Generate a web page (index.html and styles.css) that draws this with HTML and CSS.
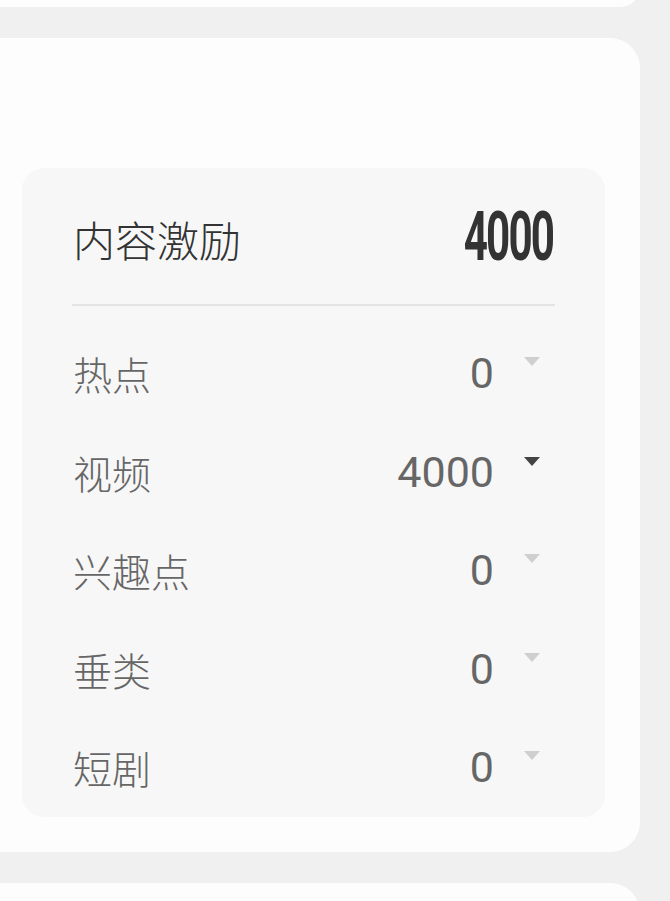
FILE: index.html
```html
<!DOCTYPE html>
<html lang="zh-CN">
<head>
<meta charset="utf-8">
<title>内容激励</title>
<link rel="stylesheet" href="styles.css">
</head>
<body>
<div class="page">
  <div class="card card-top"></div>
  <div class="card card-main">
    <div class="panel">
      <div class="panel-head">
        <span class="head-title">内容激励</span>
        <span class="head-value">4000</span>
      </div>
      <div class="divider"></div>
      <div class="rows">
        <div class="row">
          <span class="row-label">热点</span>
          <span class="row-value">0</span>
          <span class="caret caret-light"></span>
        </div>
        <div class="row">
          <span class="row-label">视频</span>
          <span class="row-value">4000</span>
          <span class="caret caret-dark"></span>
        </div>
        <div class="row">
          <span class="row-label">兴趣点</span>
          <span class="row-value">0</span>
          <span class="caret caret-light"></span>
        </div>
        <div class="row">
          <span class="row-label">垂类</span>
          <span class="row-value">0</span>
          <span class="caret caret-light"></span>
        </div>
        <div class="row">
          <span class="row-label">短剧</span>
          <span class="row-value">0</span>
          <span class="caret caret-light"></span>
        </div>
      </div>
    </div>
  </div>
  <div class="card card-next"></div>
</div>
</body>
</html>
```
FILE: styles.css
```css
html, body {
  margin: 0;
  padding: 0;
}
body {
  background: #eff0ef;
  font-family: Roboto, "Noto Sans CJK SC", sans-serif;
  overflow: hidden;
}
.page {
  width: 670px;
  height: 901px;
  overflow: hidden;
  display: flex;
  flex-direction: column;
}
.card {
  background: #fdfdfd;
  border-radius: 30px;
  margin-left: -40px;
  width: 680px;
  flex: none;
}
.card-top {
  height: 40px;
  margin-top: -33px;
}
.card-main {
  margin-top: 31px;
  height: 814px;
  display: flex;
  flex-direction: column;
  box-sizing: border-box;
  padding: 130px 35px 37px 62px;
}
.card-next {
  margin-top: 31px;
  height: 60px;
}
.panel {
  flex: 1;
  background: #f7f7f7;
  border-radius: 22px;
  padding: 0 50px;
  display: flex;
  flex-direction: column;
}
.panel-head {
  height: 136px;
  display: flex;
  align-items: center;
  justify-content: space-between;
}
.head-title {
  font-family: "Noto Sans CJK SC", sans-serif;
  font-size: 42px;
  font-weight: 300;
  color: #333;
  padding-left: 1px;
  padding-top: 4px;
}
.head-value {
  font-family: Roboto, sans-serif;
  font-weight: 700;
  font-size: 68px;
  color: #333;
  letter-spacing: -3px;
  display: inline-block;
  transform: scaleX(0.62);
  transform-origin: right center;
  margin-right: 2px;
  padding-top: 2px;
}
.divider {
  height: 2px;
  background: #e4e4e4;
}
.rows {
  display: flex;
  flex-direction: column;
  padding-top: 18px;
}
.row {
  height: 98.5px;
  display: flex;
  align-items: center;
}
.row-label {
  flex: 1;
  font-family: "Noto Sans CJK SC", sans-serif;
  font-size: 39px;
  font-weight: 300;
  color: #666;
  padding-left: 1px;
}
.row-value {
  font-family: Roboto, sans-serif;
  font-size: 43px;
  color: #666;
}
.caret {
  align-self: flex-start;
  margin-top: 33px;
  margin-left: 30px;
  margin-right: 15px;
  width: 0;
  height: 0;
  border-left: 8px solid transparent;
  border-right: 8px solid transparent;
  border-top: 9px solid #cfcfcf;
}
.caret-dark {
  border-top-color: #444;
  margin-top: 34px;
}
```
